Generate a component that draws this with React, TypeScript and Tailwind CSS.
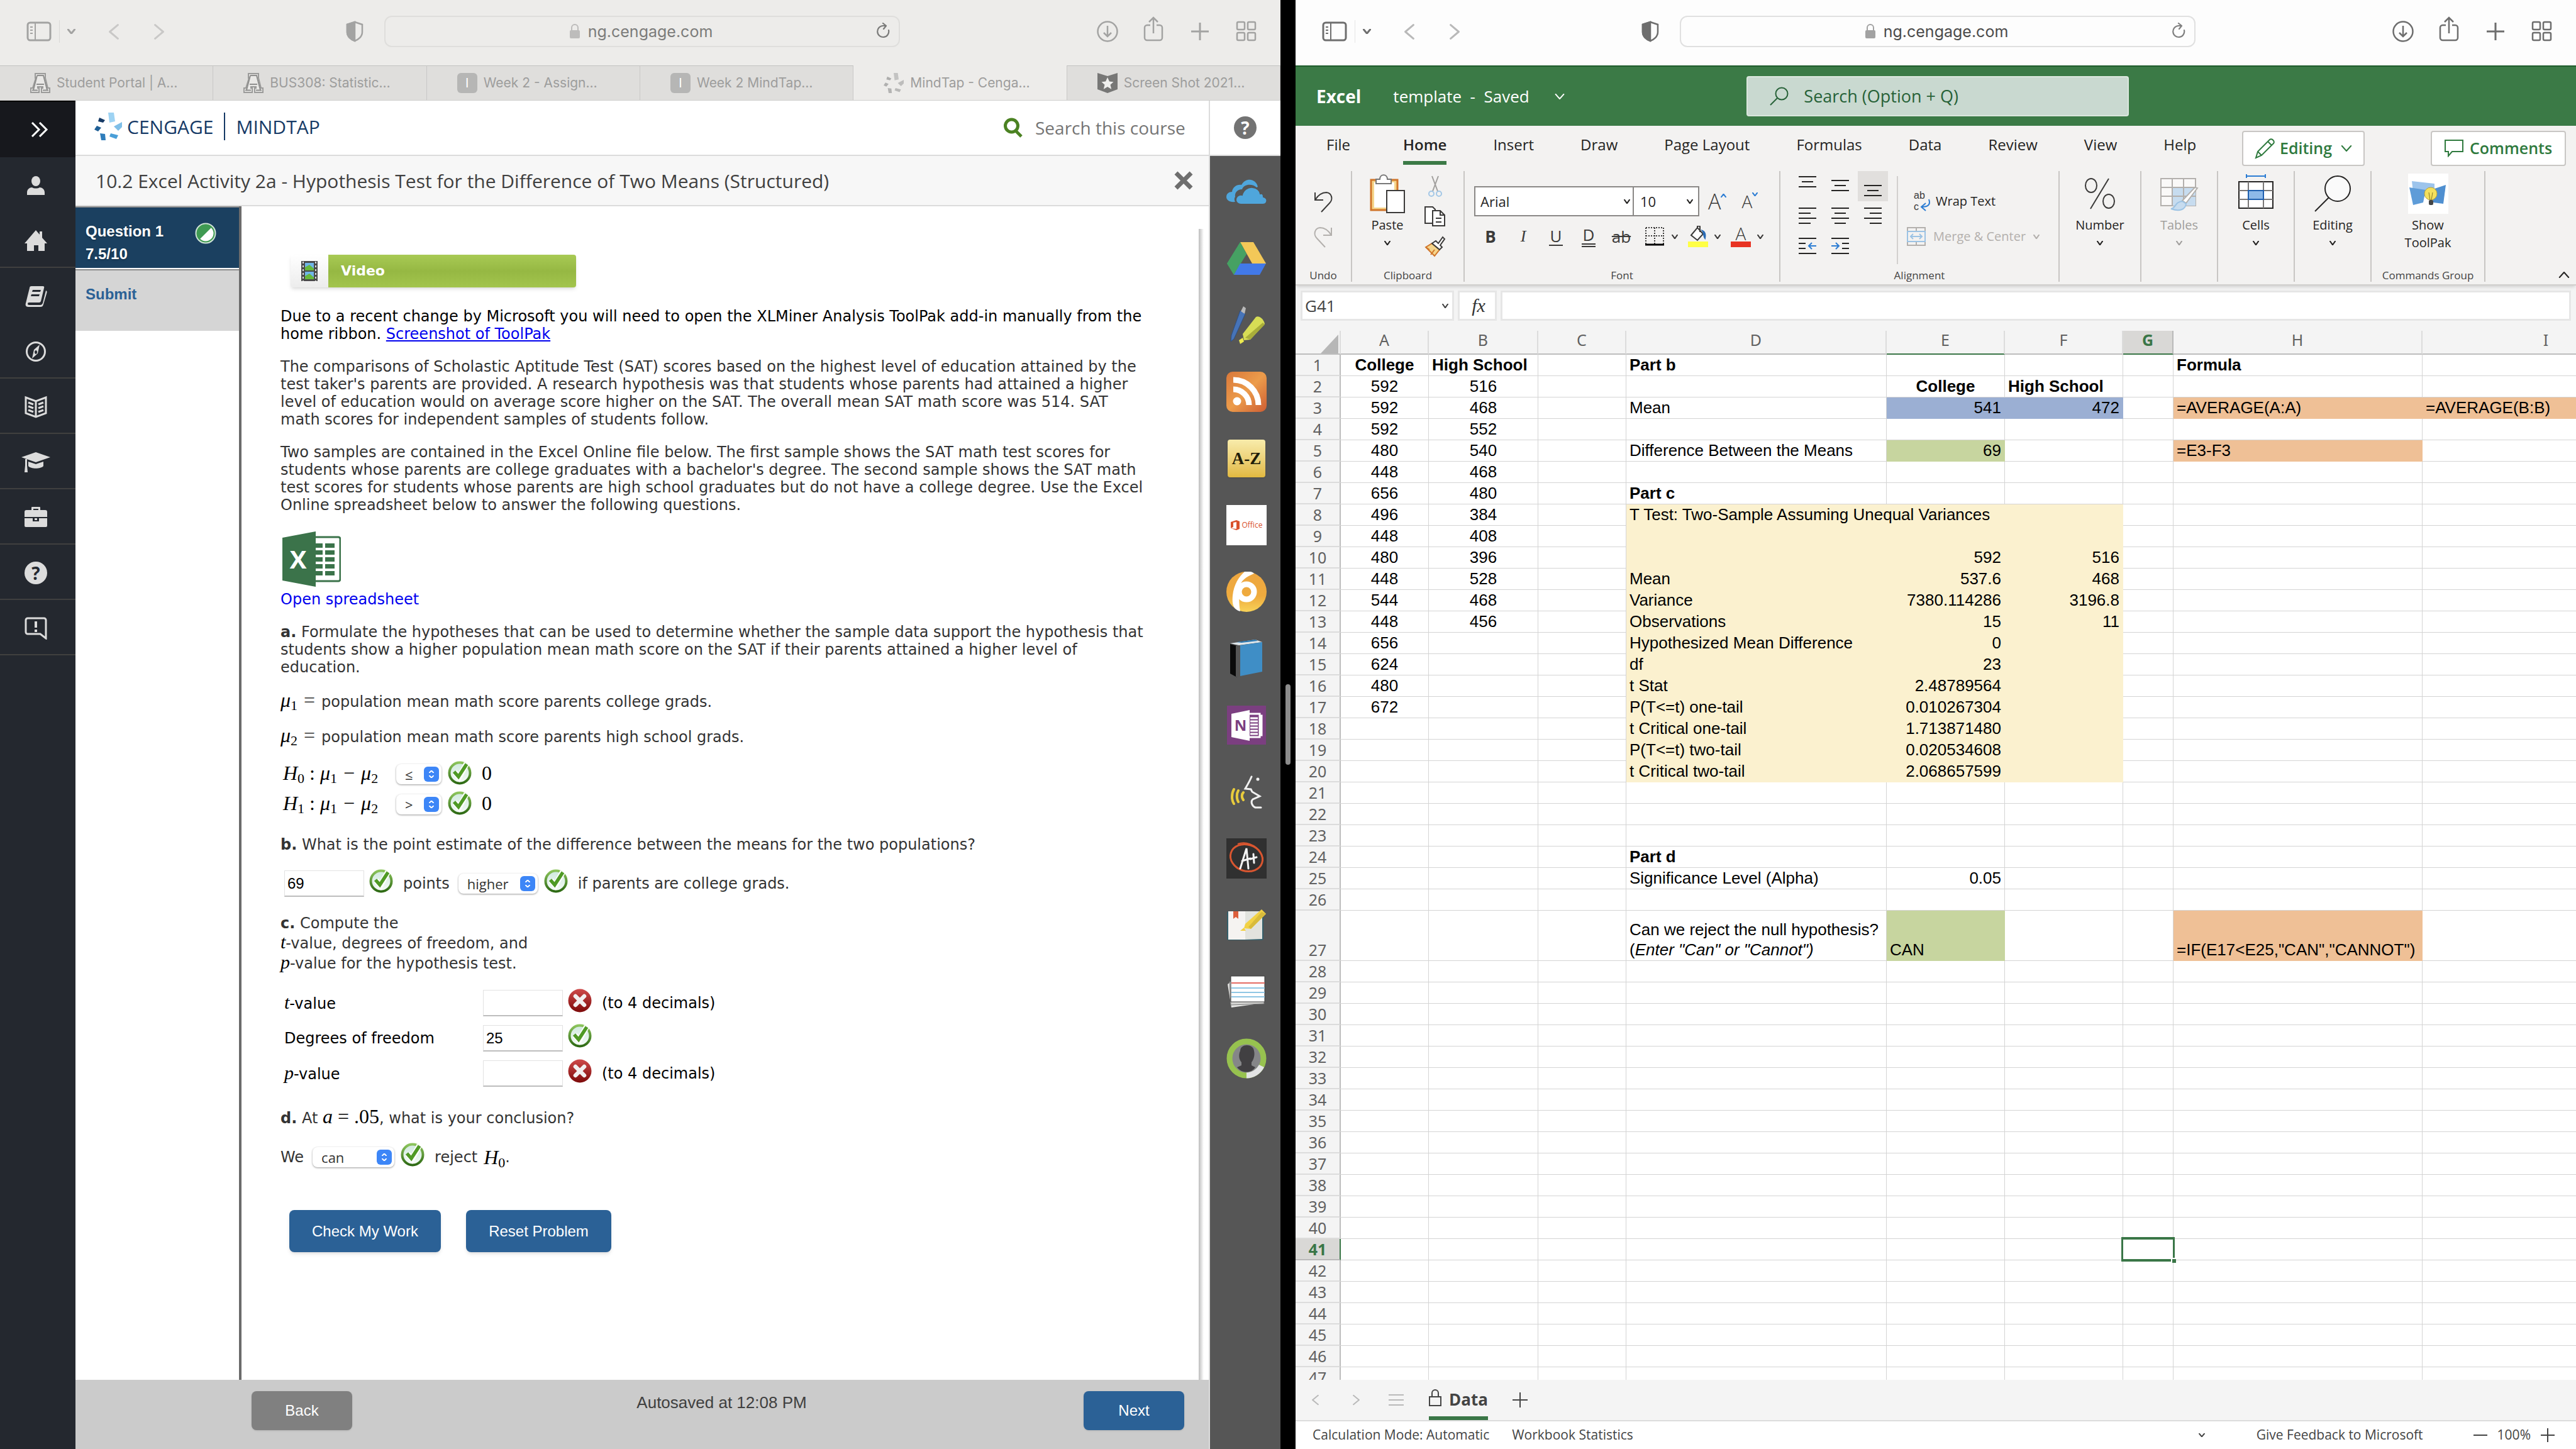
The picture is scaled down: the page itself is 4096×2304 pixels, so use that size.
import React from "react";

const SANS = "font-['Open_Sans','Noto_Sans',sans-serif]";
const ARIAL = "font-['Liberation_Sans',Arial,sans-serif]";
const VERDANA = "font-['DejaVu_Sans',Verdana,sans-serif]";
const SERIF = "font-['Liberation_Serif','Times_New_Roman',serif]";
const SYSTEM = "font-['Inter',Roboto,sans-serif]";

/* ---------- shared glyphs ---------- */

function Chevron({ dir = "down", w = 14, h = 10, sw = 2, className = "" }: { dir?: "down" | "up" | "left" | "right"; w?: number; h?: number; sw?: number; className?: string }) {
  const d = {
    down: "M1 1L5 9L9 1",
    up: "M1 9L5 1L9 9",
    left: "M9 1L1 5L9 9",
    right: "M1 1L9 5L1 9",
  }[dir];
  return (
    <svg width={w} height={h} viewBox="0 0 10 10" preserveAspectRatio="none" fill="none" stroke="currentColor" strokeWidth={sw} className={className} aria-hidden="true">
      <path d={d} vectorEffect="non-scaling-stroke" strokeLinecap="round" strokeLinejoin="round" />
    </svg>
  );
}

function Starburst({ gray = false, size = 44 }: { gray?: boolean; size?: number }) {
  const c = gray
    ? ["#c3c3c2", "#bdbdbc", "#b9b9b8", "#b4b4b3", "#b0b0af", "#adadac"]
    : ["#9ed3f3", "#7fbfe8", "#4a9fd8", "#2f7dbb", "#1f5f96", "#163a66"];
  return (
    <svg width={size} height={size} viewBox="0 0 44 44" aria-hidden="true">
      <path d="M22 0L31 0L33 14L24 16Z" fill={c[0]} />
      <path d="M44 15L44 23L38 29L31 22Z" fill={c[1]} />
      <path d="M26 33L38 36L35 42L24 38Z" fill={c[2]} />
      <path d="M9 33L17 34L18 44L11 44Z" fill={c[3]} />
      <path d="M4 21L11 24L6 30L0 27Z" fill={c[4]} />
      <path d="M8 8L17 12L14 16L6 14Z" fill={c[5]} />
    </svg>
  );
}

/* ---------- browser chrome ---------- */

function BrowserBar({ dim = false }: { dim?: boolean }) {
  const ink = dim ? "text-[#a3a3a2]" : "text-[#6e6e6e]";
  return (
    <div className={`flex h-[104px] shrink-0 items-center pb-1 ${dim ? "bg-[#edecea]" : "bg-[#fdfdfd]"} ${ink}`}>
      <div className="flex flex-1 items-center pl-[42px]">
        <button aria-label="Show sidebar">
          <svg width="40" height="32" viewBox="0 0 40 32" fill="none" stroke="currentColor" strokeWidth="3">
            <rect x="2" y="2" width="36" height="28" rx="4" />
            <path d="M14 2V30M6 9H10M6 14H10M6 19H10" strokeWidth="2" />
          </svg>
        </button>
        <span className={`ml-3 h-9 w-px ${dim ? "bg-[#d9d8d6]" : "bg-[#e6e6e6]"}`} />
        <button aria-label="Tab groups" className="ml-3"><Chevron w={13} h={8} sw={3} /></button>
        <button aria-label="Back" className={dim ? "ml-[53px] text-[#c9c8c7]" : "ml-[53px] text-[#b9b9b9]"}><Chevron dir="left" w={16} h={27} sw={3} /></button>
        <button aria-label="Forward" className={dim ? "ml-14 text-[#c9c8c7]" : "ml-14 text-[#b9b9b9]"}><Chevron dir="right" w={16} h={27} sw={3} /></button>
        <button aria-label="Privacy report" className="mr-8 ml-auto">
          <svg width="30" height="34" viewBox="0 0 30 34" fill="none" stroke="currentColor" strokeWidth="2.5">
            <path d="M15 2L27 6V18C27 25 21 30 15 32C9 30 3 25 3 18V6Z" />
            <path d="M15 2L3 6V18C3 25 9 30 15 32Z" fill="currentColor" />
          </svg>
        </button>
      </div>
      <div className={`flex h-[50px] w-[820px] items-center rounded-xl border-2 pr-3 pl-8 ${dim ? "border-[#dfdedc]" : "border-[#e0e0e0]"}`}>
        <svg width="18" height="24" viewBox="0 0 18 24" className={`ml-auto ${dim ? "text-[#bdbcbb]" : "text-[#a2a2a2]"}`} aria-hidden="true">
          <path d="M4 11V6a5 5 0 0 1 10 0v5" fill="none" stroke="currentColor" strokeWidth="2" />
          <rect x="1" y="10" width="16" height="13" rx="2" fill="currentColor" />
        </svg>
        <span className={`ml-3 text-[25px] leading-8 ${SYSTEM} ${dim ? "text-[#7c7c7b]" : "text-[#4b4b4b]"}`}>ng.cengage.com</span>
        <button aria-label="Reload" className={`ml-auto ${dim ? "text-[#7a7a79]" : "text-[#808080]"}`}>
          <svg width="24" height="28" viewBox="0 0 24 28" fill="none" stroke="currentColor" strokeWidth="2.2" strokeLinecap="round" strokeLinejoin="round">
            <path d="M20 12a9 9 0 1 1-9-7h5M11 1l5 4l-4 5" />
          </svg>
        </button>
      </div>
      <div className="flex flex-1 items-center justify-end gap-[37px] pr-9">
        <button aria-label="Downloads">
          <svg width="36" height="36" viewBox="0 0 36 36" fill="none" stroke="currentColor" strokeWidth="2.5"><circle cx="18" cy="18" r="15.500" /><path d="M18 9V26M12 20L18 26L24 20" /></svg>
        </button>
        <button aria-label="Share" className="pb-2">
          <svg width="36" height="40" viewBox="0 0 36 40" fill="none" stroke="currentColor" strokeWidth="2.5"><path d="M13 14H8a4 4 0 0 0-4 4v16a4 4 0 0 0 4 4h20a4 4 0 0 0 4-4V18a4 4 0 0 0-4-4h-5M18 27V3M11 9L18 2L25 9" /></svg>
        </button>
        <button aria-label="New tab" className="px-1">
          <svg width="30" height="30" viewBox="0 0 30 30" fill="none" stroke="currentColor" strokeWidth="3"><path d="M15 1V29M1 15H29" /></svg>
        </button>
        <button aria-label="Tab overview">
          <svg width="36" height="36" viewBox="0 0 36 36" fill="none" stroke="currentColor" strokeWidth="2.5"><rect x="3" y="3" width="12" height="12" rx="2" /><rect x="20" y="3" width="12" height="12" rx="2" /><rect x="3" y="20" width="12" height="12" rx="2" /><rect x="20" y="20" width="12" height="12" rx="2" /></svg>
        </button>
      </div>
    </div>
  );
}

const CollegeA = () => (
  <svg width="32" height="32" viewBox="0 0 32 32" aria-hidden="true">
    <path d="M8 1H24V8L28 24H31V31H18V24H20V22H12V24H14V31H1V24H4L9 8H8Z" fill="#e9e8e6" stroke="#9b9b9a" strokeWidth="2" />
    <path d="M11 4H21L27 27M11 4L5 27M3 27.500H12M20 27.500H29M10 18H22" fill="none" stroke="#8f8f8e" strokeWidth="2" />
  </svg>
);
const LetterI = () => <span className="flex h-8 w-8 items-center justify-center rounded-md bg-[#b6b6b5] text-[20px] text-white">I</span>;
const StarBadge = () => (
  <svg width="32" height="32" viewBox="0 0 32 32" aria-hidden="true">
    <path d="M0 0L16 5L32 0V26L16 32L0 26Z" fill="#777776" />
    <path d="M16 7l3 6.500l6.500.7l-5 4.500l1.700 7L16 22l-6.200 3.700l1.700-7l-5-4.500l6.500-.7z" fill="#efefee" />
  </svg>
);

const browserTabs = [
  { label: "Student Portal | A…", icon: <CollegeA /> },
  { label: "BUS308: Statistic…", icon: <CollegeA /> },
  { label: "Week 2 - Assign…", icon: <LetterI /> },
  { label: "Week 2 MindTap…", icon: <LetterI /> },
  { label: "MindTap - Cenga…", icon: <Starburst gray size={32} />, active: true },
  { label: "Screen Shot 2021…", icon: <StarBadge /> },
];

function BrowserTabs() {
  return (
    <nav className={`grid h-14 shrink-0 grid-cols-6 border-b border-[#cfcecd] text-[21px] text-[#9d9d9c] ${SYSTEM}`}>
      {browserTabs.map((t) => (
        <a key={t.label} href="#" className={`flex items-center gap-2.5 overflow-hidden border-r border-[#c9c8c7] pl-12 whitespace-nowrap ${t.active ? "bg-[#edecea]" : "border-t border-t-[#c2c2c1] bg-[#dfdedc]"}`}>
          {t.icon}
          <span>{t.label}</span>
        </a>
      ))}
    </nav>
  );
}

/* ---------- MindTap ---------- */

const ic = { width: 36, height: 36, viewBox: "0 0 36 36", fill: "currentColor" } as const;
const railIcons: { label: string; icon: React.ReactNode; line: boolean }[] = [
  { label: "Profile", line: false, icon: <svg {...ic}><ellipse cx="18" cy="11" rx="7" ry="8" /><path d="M4 33v-4c0-5 4-8 8-8c3 2 9 2 12 0c4 0 8 3 8 8v4z" /></svg> },
  { label: "Home", line: true, icon: <svg {...ic}><path d="M18 1L24 8V3H28V13L36 22H32V34H22V25H15V34H4V22H0Z" /></svg> },
  { label: "Reader", line: false, icon: <svg {...ic}><path fillRule="evenodd" d="M11 2H29a2 2 0 0 1 2 3L26 26a3 3 0 0 1-3 2H7a2 2 0 0 0 0 4H25c2 0 3-1 4-3L34 9c2 1 2 2 1 5L30 31c-1 3-2 4-5 4H6c-4 0-5-3-4-6L8 5c0-2 1-3 3-3zM13 8L12 11H25L26 8zM11 15L10 18H23L24 15z" /></svg> },
  { label: "Explore", line: true, icon: <svg {...ic}><circle cx="18" cy="18" r="14.500" fill="none" stroke="currentColor" strokeWidth="3" /><path fillRule="evenodd" d="M24 7L21 21L12 29L15 15zM18 16a2 3 0 1 0 .1 0z" /></svg> },
  { label: "Book", line: true, icon: <svg {...ic} fill="none" stroke="currentColor" strokeWidth="3"><path d="M2 3L18 9L34 3V28L18 34L2 28ZM18 9V34M6 11L14 14M6 17L14 20M6 23L14 26M30 11L22 14M30 17L22 20M30 23L22 26" /></svg> },
  { label: "Courses", line: true, icon: <svg width="46" height="34" viewBox="0 0 46 34" fill="currentColor"><path d="M23 1L46 9L23 17L0 9ZM11 16L23 20L35 16V23C31 28 15 28 11 23ZM6 12H9V22L10 33H5L6 22Z" /></svg> },
  { label: "Work", line: true, icon: <svg {...ic}><path fillRule="evenodd" d="M11 6V2a1 1 0 0 1 1-1h12a1 1 0 0 1 1 1v4h8a3 3 0 0 1 3 3v8H0V9a3 3 0 0 1 3-3zM14 6h8V4h-8zM0 19H13V24H23V19H36V31a2 2 0 0 1-2 2H2a2 2 0 0 1-2-2zM16 19h4v3h-4z" /></svg> },
  { label: "Help", line: true, icon: <span className={`flex h-9 w-9 items-center justify-center rounded-full bg-[#dcdcdc] text-[28px] leading-9 font-bold text-[#24282f] ${SANS}`}>?</span> },
  { label: "Feedback", line: true, icon: <svg {...ic} fill="none" stroke="currentColor" strokeWidth="3"><path d="M5 2H31a3 3 0 0 1 3 3V34L25 27H5a3 3 0 0 1-3-3V5a3 3 0 0 1 3-3Z" /><path d="M18 7V17M18 20V24" strokeWidth="4" /></svg> },
];

function LeftRail() {
  return (
    <nav className="flex w-[120px] shrink-0 flex-col bg-[#24282f] text-[#dcdcdc]">
      <button aria-label="Expand menu" className="flex h-[90px] items-center justify-center border-t-2 border-black bg-[#17181d] pl-1.5 text-white">
        <svg width="28" height="24" viewBox="0 0 28 24" fill="none" stroke="currentColor" strokeWidth="3"><path d="M2 1L13 12L2 23M14 1L25 12L14 23" /></svg>
      </button>
      {railIcons.map((r) => (
        <button key={r.label} aria-label={r.label} className={`flex h-[88px] items-center justify-center border-b-2 pt-1 pr-1.5 ${r.line ? "border-[#40403f]" : "border-transparent"}`}>
          {r.icon}
        </button>
      ))}
    </nav>
  );
}

const toolIcons: { label: string; icon: React.ReactNode }[] = [
  { label: "OneDrive", icon: <svg width="64" height="40" viewBox="0 0 64 40" fill="#4fa6dc"><path d="M14 36C5 37 0 33 0 28c0-5 4-8 9-8c1-7 7-12 15-11C28 2 34 0 39 1c6 1 10 6 11 11L48 13C42 7 28 7 25 16c-8 0-12 6-11 12c-2 3-1 6 0 8z" /><path d="M23 40c-4 0-8-3-8-7c0-5 4-9 10-8c2-8 9-13 17-12c7 1 11 5 12 10c3-1 5 1 5 5c5 1 6 5 5 8c-1 3-3 4-6 4z" stroke="#565656" strokeWidth="2" /></svg> },
  { label: "Google Drive", icon: <svg width="64" height="54" viewBox="0 0 64 54"><path d="M22 1L32 20L12 53L1 35Z" fill="#43a05f" /><path d="M22 1H43L63 35H41Z" fill="#f3c858" /><path d="M1 35L22 1L32 20L22 35L12 53Z" fill="#46a163" /><path d="M22 35H63L53 53H12Z" fill="#4279e8" /></svg> },
  { label: "Pen and highlighter", icon: <svg width="60" height="60" viewBox="0 0 60 60"><path d="M20 7L28 12L10 52L5 56L6 46Z" fill="#4774b8" stroke="#2d4f86" /><path d="M21 8L25 0L29 3L27 12Z" fill="#b9b9b9" /><path d="M24 44L45 17C51 14 58 22 59 28L36 53L26 54Z" fill="#d7dd55" /><path d="M36 53L59 29L56 26L28 50Z" fill="#a9ae3a" /><path d="M18 54L24 50L26 56L20 60Z" fill="#ecea4f" /></svg> },
  { label: "RSS", icon: <svg width="64" height="64" viewBox="0 0 64 64"><defs><linearGradient id="rss" x2="1" y2="1"><stop stopColor="#d9773a" /><stop offset=".5" stopColor="#ec9c4b" /><stop offset="1" stopColor="#cd5d33" /></linearGradient></defs><rect width="64" height="64" rx="10" fill="url(#rss)" /><circle cx="17" cy="47" r="6.500" fill="#fff" /><path d="M11 28a25 25 0 0 1 25 25M11 13a40 40 0 0 1 40 40" fill="none" stroke="#fff" strokeWidth="9" /></svg> },
  { label: "Glossary", icon: <span className={`flex h-[60px] w-[60px] items-center justify-center rounded bg-gradient-to-b from-[#f8ecab] to-[#e2b93f] text-[27px] font-bold text-[#211d08] shadow ${SERIF}`}>A-Z</span> },
  { label: "Office", icon: <span className={`flex h-16 w-16 items-center justify-center gap-1 bg-white text-[12px] text-[#d9512c] ${SANS}`}><svg width="14" height="16" viewBox="0 0 14 16" aria-hidden="true"><path d="M0 3L9 0L14 2V14L9 16L0 13L9 14V3L4 4V11L0 13Z" fill="#d9512c" /></svg>Office</span> },
  { label: "Bongo", icon: <svg width="64" height="64" viewBox="0 0 64 64"><defs><linearGradient id="six" x2="0" y2="1"><stop stopColor="#eda640" /><stop offset=".6" stopColor="#efab3e" /><stop offset="1" stopColor="#f8d258" /></linearGradient></defs><circle cx="32" cy="32" r="32" fill="url(#six)" /><circle cx="32" cy="32" r="12" fill="none" stroke="#fff" strokeWidth="9" /><path d="M29 0C40-1 42 1 44 3C32 8 22 14 21 26C20 44 20 52 22 63C10 60 9 50 10 38C12 20 20 8 29 0Z" fill="#fff" /></svg> },
  { label: "Textbook", icon: <svg width="56" height="60" viewBox="0 0 56 60"><path d="M2 7L13 10V60L2 54Z" fill="#0a0a0a" /><path d="M2 6L42 0L53 4L16 9Z" fill="#dfe6ea" /><path d="M12 4L42 0L46 2L20 5Z" fill="#2a77b0" /><path d="M11 10L18 9V58L11 60Z" fill="#555" /><path d="M18 9L53 4V51L18 58Z" fill="#3f8ec6" /></svg> },
  { label: "OneNote", icon: <svg width="62" height="62" viewBox="0 0 62 62"><rect width="62" height="62" fill="#7b3f80" /><path d="M7 13L36 7V56L7 50Z" fill="#fff" /><text x="21.500" y="40" textAnchor="middle" fontSize="24" fontWeight="700" fill="#7b3f80" fontFamily="Open Sans">N</text><path d="M36 13H52V50H36M52 16H55V26H52M52 28H55V36H52M52 38H55V47H52" fill="none" stroke="#fff" strokeWidth="3" /><path d="M37 20H49M37 25H49M37 30H49M37 35H49M37 40H49M37 45H49" stroke="#fff" strokeWidth="3" /></svg> },
  { label: "ReadSpeaker", icon: <svg width="54" height="54" viewBox="0 0 54 54" fill="none" strokeLinecap="round"><path d="M35 3C32 10 28 17 25 22L34 23L36 27L48 34L37 39C33 43 36 50 41 52H50" stroke="#f0f0f0" strokeWidth="3" /><circle cx="45" cy="7" r="2.500" fill="#f0f0f0" /><path d="M22 28C19 31 19 36 22 40M14 25C11 30 11 38 14 43M7 23C3 30 3 40 7 46" stroke="#e8cb3d" strokeWidth="4" /></svg> },
  { label: "Grades", icon: <svg width="64" height="64" viewBox="0 0 64 64"><rect width="64" height="64" fill="#303030" /><ellipse cx="32" cy="31" rx="26" ry="21" transform="rotate(18 32 31)" fill="none" stroke="#d95630" strokeWidth="3" /><path d="M18 9C30 4 46 10 54 22" fill="none" stroke="#d95630" strokeWidth="2" /><path d="M22 48L32 16L35 48M25 36L38 32M38 33L48 30M43 25L44 39" fill="none" stroke="#f4f4f4" strokeWidth="3" strokeLinecap="round" /></svg> },
  { label: "Notebook", icon: <svg width="62" height="50" viewBox="0 0 62 50"><rect y="3" width="58" height="46" rx="3" fill="#35606c" /><path d="M2 3H29V48H2Z" fill="#f5f3f1" /><path d="M29 3H56V47L29 48Z" fill="#e2e3de" /><path d="M10 3H18V15L14 12L10 15Z" fill="#dc5f3c" /><path d="M29 23L55 0L62 7L38 31L27 30Z" fill="#f2d144" /><path d="M62 7L55 4L34 28L38 31Z" fill="#d8bb3b" /><path d="M21 34L27 29L30 34Z" fill="#f2d144" /></svg> },
  { label: "Flashcards", icon: <svg width="60" height="52" viewBox="0 0 60 52"><path d="M0 14L8 8L56 44L6 51Z" fill="#e8e8e6" /><path d="M3 10L58 6V45L5 47Z" fill="#d4d4d2" stroke="#777" /><path d="M5 1H59V42H5Z" fill="#fff" stroke="#3b3b3b" /><path d="M6 12H59" stroke="#e46b62" strokeWidth="2" /><path d="M6 20H59M6 27H59M6 34H59" stroke="#8fc6e4" strokeWidth="2" /></svg> },
  { label: "Account", icon: <svg width="64" height="64" viewBox="0 0 64 64"><circle cx="32" cy="32" r="27" fill="#858688" stroke="#97c24f" strokeWidth="9" /><path d="M32 59A27 27 0 0 0 56 44" fill="none" stroke="#e3e4e5" strokeWidth="9" /><path d="M22 20C22 8 43 8 44 20C46 28 42 36 40 38V43L46 46C40 56 24 56 17 46L24 43V38C20 34 19 26 22 20Z" fill="#414042" /></svg> },
];

function ToolRail() {
  return (
    <aside className="flex w-[112px] shrink-0 flex-col bg-[#565656]">
      <div className="flex h-[88px] items-center justify-center border-b-2 border-[#dcdcdc] bg-white">
        <button aria-label="Help" className={`h-9 w-9 rounded-full bg-[#737373] text-[28px] leading-9 font-bold text-white ${SANS}`}>?</button>
      </div>
      <div className="flex flex-col pt-1 pl-1">
        {toolIcons.map((t) => (
          <button key={t.label} aria-label={t.label} className="flex h-[106px] items-center justify-center">{t.icon}</button>
        ))}
      </div>
    </aside>
  );
}

const Check = () => (
  <svg width="38" height="38" viewBox="0 0 38 38" className="shrink-0" role="img" aria-label="Correct">
    <defs>
      <linearGradient id="ck" x2="0" y2="1"><stop stopColor="#8cc45c" /><stop offset="1" stopColor="#2e6a14" /></linearGradient>
      <linearGradient id="ckf" x2="0" y2="1"><stop stopColor="#cfe9dd" /><stop offset="1" stopColor="#f6fbf8" /></linearGradient>
    </defs>
    <circle cx="19" cy="19" r="16.500" fill="url(#ckf)" stroke="url(#ck)" strokeWidth="4" />
    <path d="M11 18L18 26L30 4" fill="none" stroke="#fff" strokeWidth="9" />
    <path d="M10 17L17 25L30 5" fill="none" stroke="#4f9a25" strokeWidth="5.500" />
  </svg>
);

const Cross = () => (
  <svg width="38" height="38" viewBox="0 0 38 38" className="shrink-0" role="img" aria-label="Incorrect">
    <defs><linearGradient id="xx" x2="0" y2="1"><stop stopColor="#cf4a4a" /><stop offset="1" stopColor="#7d0a0a" /></linearGradient></defs>
    <circle cx="19" cy="19" r="18.500" fill="url(#xx)" />
    <path d="M12 12L26 26M26 12L12 26" stroke="#f2f0f0" strokeWidth="6.500" strokeLinecap="round" />
  </svg>
);

function Pick({ label, value, className }: { label: string; value: string; className: string }) {
  return (
    <span className={`relative inline-block h-8 shrink-0 rounded-lg bg-white align-middle shadow-[0_1px_3px_rgba(0,0,0,0.4)] ${className}`}>
      <select aria-label={label} defaultValue={value} className={`block h-full w-full appearance-none pl-3.5 text-[22px] leading-8 text-[#333] ${SANS}`}>
        <option>{value}</option>
      </select>
      <span className="pointer-events-none absolute top-1 right-1 flex h-6 w-6 flex-col items-center justify-center gap-1 rounded-md bg-[#3d86f7] text-white">
        <Chevron dir="up" w={8} h={4} sw={2} />
        <Chevron w={8} h={4} sw={2} />
      </span>
    </span>
  );
}

function Answer({ label, value = "" }: { label: string; value?: string }) {
  return <input aria-label={label} defaultValue={value} className={`h-[42px] w-[127px] shrink-0 border border-b-2 border-[#e2e2e2] border-b-[#bdbdbd] px-1 text-[24px] text-black ${ARIAL}`} />;
}

function Mu({ n }: { n: string }) {
  return (
    <span className={`text-[32px] text-black ${SERIF}`}>
      <i>μ</i>
      <sub className="bottom-[-5px] text-[22px] leading-none">{n}</sub>
    </span>
  );
}

function Hyp({ n, sign }: { n: string; sign: string }) {
  return (
    <div className={`flex h-12 items-center pl-1 text-[32px] text-black ${SERIF}`}>
      <span className="w-[180px] whitespace-nowrap">
        <i>H</i><sub className="bottom-[-5px] text-[22px] leading-none">{n}</sub>
        <span className="mx-2">:</span>
        <Mu n="1" />
        <span className="mx-2.5">−</span>
        <Mu n="2" />
      </span>
      <span className="flex pt-1"><Pick label={`Hypothesis ${n} relation`} value={sign} className="w-[72px]" /></span>
      <span className="ml-2.5"><Check /></span>
      <span className="ml-4">0</span>
    </div>
  );
}

function Exercise() {
  return (
    <main className={`flex-1 overflow-hidden pt-[77px] pl-[62px] text-[24px] leading-7 whitespace-nowrap text-[#333] ${VERDANA}`}>
      <a href="#" className="ml-4 flex h-[52px] w-[454px] items-stretch overflow-hidden rounded shadow-md">
        <span className="flex w-[60px] items-center justify-center bg-gradient-to-b from-white to-[#ececec]">
          <svg width="26" height="32" viewBox="0 0 26 32" aria-hidden="true"><rect width="26" height="32" fill="#4a4a4a" /><rect x="6" y="3" width="14" height="12" fill="#6fb5e8" /><rect x="6" y="17" width="14" height="12" fill="#6fb5e8" /><path d="M6 15V10L13 6L20 12V15ZM6 29V24L13 20L20 26V29Z" fill="#67b93c" /><path d="M3 1V32M23 1V32" stroke="#ddd" strokeWidth="2" strokeDasharray="3 3" /></svg>
        </span>
        <span className="flex flex-1 items-center bg-gradient-to-b from-[#a8ca54] via-[#96b843] to-[#a3c54d] pl-5 text-[22px] font-bold text-white">Video</span>
      </a>
      <p className="mt-8 text-black">
        Due to a recent change by Microsoft you will need to open the XLMiner Analysis ToolPak add-in manually from the<br />
        home ribbon. <a href="#" className="text-[#0000ee] underline">Screenshot of ToolPak</a>
      </p>
      <p className="mt-6">
        The comparisons of Scholastic Aptitude Test (SAT) scores based on the highest level of education attained by the<br />
        test taker's parents are provided. A research hypothesis was that students whose parents had attained a higher<br />
        level of education would on average score higher on the SAT. The overall mean SAT math score was 514. SAT<br />
        math scores for independent samples of students follow.
      </p>
      <p className="mt-6">
        Two samples are contained in the Excel Online file below. The first sample shows the SAT math test scores for<br />
        students whose parents are college graduates with a bachelor's degree. The second sample shows the SAT math<br />
        test scores for students whose parents are high school graduates but do not have a college degree. Use the Excel<br />
        Online spreadsheet below to answer the following questions.
      </p>
      <a href="#" className="mt-7 block w-fit text-[#0000ee]">
        <svg width="96" height="88" viewBox="0 0 96 88" aria-hidden="true" className="mb-1.5">
          <path d="M52 9H92a3 3 0 0 1 3 3V76a3 3 0 0 1-3 3H52" fill="#fff" stroke="#3b734a" strokeWidth="3" />
          <path d="M54 19H67V26H54ZM71 19H86V26H71ZM54 30H67V37H54ZM71 30H86V37H71ZM54 41H67V48H54ZM71 41H86V48H71ZM54 52H67V59H54ZM71 52H86V59H71ZM54 63H67V70H54ZM71 63H86V70H71Z" fill="#3b734a" />
          <path d="M3 10L56 0V88L3 78Z" fill="#3b734a" />
          <text x="28" y="59" textAnchor="middle" fontSize="40" fontWeight="700" fill="#fff" fontFamily="Open Sans">X</text>
        </svg>
        Open spreadsheet
      </a>
      <p className="mt-6">
        <b>a.</b> Formulate the hypotheses that can be used to determine whether the sample data support the hypothesis that<br />
        students show a higher population mean math score on the SAT if their parents attained a higher level of<br />
        education.
      </p>
      <p className="mt-2.5 h-14 leading-[56px]"><Mu n="1" /><span className={`mx-2.5 text-[32px] ${SERIF}`}>=</span>population mean math score parents college grads.</p>
      <p className="h-14 leading-[56px]"><Mu n="2" /><span className={`mx-2.5 text-[32px] ${SERIF}`}>=</span>population mean math score parents high school grads.</p>
      <div className="mt-2">
        <Hyp n="0" sign="≤" />
        <Hyp n="1" sign=">" />
      </div>
      <p className="mt-7"><b>b.</b> What is the point estimate of the difference between the means for the two populations?</p>
      <div className="mt-5 flex h-14 items-center pl-1.5">
        <Answer label="Point estimate" value="69" />
        <span className="mr-4 mb-2 ml-2"><Check /></span>
        points
        <span className="mr-2.5 ml-3.5 flex"><Pick label="Direction" value="higher" className="w-[126px]" /></span>
        <span className="mr-4 mb-2"><Check /></span>
        if parents are college grads.
      </div>
      <p className="mt-5 leading-[30px]">
        <b>c.</b> Compute the<br />
        <i className={`text-[30px] text-black ${SERIF}`}>t</i>-value, degrees of freedom, and<br />
        <i className={`text-[30px] text-black ${SERIF}`}>p</i>-value for the hypothesis test.
      </p>
      <table className="mt-5 ml-1.5 text-black">
        <tbody>
          {[
            { k: "t", label: <><i className={`text-[30px] ${SERIF}`}>t</i>-value</>, v: "", ok: false },
            { k: "Degrees of freedom", label: "Degrees of freedom", v: "25", ok: true },
            { k: "p", label: <><i className={`text-[30px] ${SERIF}`}>p</i>-value</>, v: "", ok: false },
          ].map((r) => (
            <tr key={r.k} className="h-14">
              <th scope="row" className="w-[316px] p-0 text-left font-normal">{r.label}</th>
              <td className="p-0">
                <div className="flex items-center">
                  <Answer label={r.k} value={r.v} />
                  <span className="mr-4 mb-2 ml-2">{r.ok ? <Check /> : <Cross />}</span>
                  {!r.ok && "(to 4 decimals)"}
                </div>
              </td>
            </tr>
          ))}
        </tbody>
      </table>
      <p className="mt-6.5"><b>d.</b> At <span className={`text-[32px] leading-7 text-black ${SERIF}`}><i>a</i><span className="mx-2">=</span>.05</span>, what is your conclusion?</p>
      <div className="mt-5 flex h-14 items-center">
        We
        <span className="mr-2.5 ml-3.5 flex"><Pick label="Conclusion" value="can" className="w-[130px]" /></span>
        <span className="mr-4 mb-2"><Check /></span>
        reject
        <span className={`ml-2.5 text-[32px] text-black ${SERIF}`}><i>H</i><sub className="bottom-[-5px] text-[22px]">0</sub></span>.
      </div>
      <div className={`mt-14 ml-3.5 flex gap-10 text-[24px] text-white ${ARIAL}`}>
        <button className="h-[67px] w-[241px] rounded-lg bg-[#2b6196] shadow-md">Check My Work</button>
        <button className="h-[67px] w-[231px] rounded-lg bg-[#2b6196] shadow-md">Reset Problem</button>
      </div>
    </main>
  );
}

function MindTap() {
  return (
    <section className="flex min-w-0 flex-1 flex-col overflow-hidden bg-white">
      <BrowserBar dim />
      <BrowserTabs />
      <div className="flex min-h-0 flex-1">
        <LeftRail />
        <div className="flex min-w-0 flex-1 flex-col border-r-2 border-[#dcdcdc]">
          <header className="flex h-[88px] shrink-0 items-center border-b-2 border-[#dcdcdc] pb-1 pl-[30px]">
            <a href="#" className={`flex items-center text-[30px] text-[#163a66] ${SANS}`}>
              <Starburst />
              <span className="ml-2">CENGAGE</span>
              <span className="mx-[17px] h-11 w-0.5 bg-[#163a66]" />
              <span>MINDTAP</span>
            </a>
            <label className="ml-auto flex items-center pt-1">
              <svg width="30" height="32" viewBox="0 0 30 32" fill="none" stroke="#4b8222" strokeWidth="5" aria-hidden="true"><circle cx="12.500" cy="13" r="10" /><path d="M19 21L28 30" /></svg>
              <input placeholder="Search this course" className={`ml-5 w-[276px] text-[28px] outline-none placeholder:text-[#757575] ${SANS}`} />
            </label>
          </header>
          <div className="flex h-20 shrink-0 items-center justify-between border-b-2 border-[#dcdcdc] bg-[#f7f7f7] pr-[25px] pl-8">
            <h1 className={`text-[30px] text-[#404040] ${SANS}`}>10.2 Excel Activity 2a - Hypothesis Test for the Difference of Two Means (Structured)</h1>
            <button aria-label="Close"><svg width="30" height="30" viewBox="0 0 30 30" stroke="#6e6e6e" strokeWidth="7"><path d="M3 3L27 27M27 3L3 27" /></svg></button>
          </div>
          <div className="flex min-h-0 flex-1">
            <aside className={`w-[264px] shrink-0 border-r-4 border-[#6b6b6b] text-[24px] font-bold ${ARIAL}`}>
              <a href="#" className="flex h-[98px] justify-between border-t-2 border-[#8c8c8c] bg-[#1b4060] pt-4 pr-9 pl-4 leading-9 text-white text-shadow-md">
                <span className="pt-1">Question 1<br />7.5/10</span>
                <svg width="34" height="34" viewBox="0 0 34 34" className="mt-2"><circle cx="17" cy="17" r="15" fill="#fff" stroke="#cfe3d6" strokeWidth="3" /><path d="M27 7A14 14 0 1 0 7 27Z" fill="#3f9a52" /><circle cx="17" cy="17" r="13.500" fill="none" stroke="#3f9a52" strokeWidth="2" /></svg>
              </a>
              <a href="#" className="mt-0.5 block h-[98px] border-t-2 border-[#8c8c8c] bg-[#d5d5d5] pt-5 pl-4 leading-9 text-[#2b6196]">Submit</a>
            </aside>
            <Exercise />
            <div className="w-4 shrink-0 pt-9">
              <div className="h-full w-2 bg-gradient-to-r from-[#bdbdbd] to-white" />
            </div>
          </div>
          <footer className={`flex h-[110px] shrink-0 items-start justify-between bg-[#cbcbcb] pt-[18px] pr-[39px] pl-[280px] text-[24px] text-white ${ARIAL}`}>
            <button className="h-[62px] w-40 rounded-lg bg-[#808080] shadow">Back</button>
            <p className="ml-3 text-[26px] leading-9 text-[#404040]">Autosaved at 12:08 PM</p>
            <button className="h-[62px] w-40 rounded-lg bg-[#2b6196] shadow">Next</button>
          </footer>
        </div>
        <ToolRail />
      </div>
    </section>
  );
}

/* ---------- Excel ribbon ---------- */

function Group({ label = "", className, children }: { label?: string; className: string; children: React.ReactNode }) {
  return (
    <div className={`flex shrink-0 flex-col border-r-2 border-[#c8c6c4] ${className}`}>
      <div className="flex h-[156px]">{children}</div>
      <div className="text-center text-[17px] leading-5 text-[#444]">{label}</div>
    </div>
  );
}

function BigButton({ label, second, muted, children }: { label: string; second?: string; muted?: boolean; children: React.ReactNode }) {
  return (
    <button className={`flex w-full flex-col items-center text-[20px] leading-7 ${muted ? "text-[#a19f9d]" : "text-[#252423]"}`}>
      <span className="flex h-[72px] items-center">{children}</span>
      <span>{label}</span>
      <span className="flex h-7 items-center">{second ?? <Chevron w={10} h={7} />}</span>
    </button>
  );
}

function Lines({ rows }: { rows: [number, number, number][] }) {
  return (
    <svg width="30" height="48" viewBox="0 0 30 48" stroke="#252423" strokeWidth="2" aria-hidden="true">
      {rows.map(([a, b, y]) => <path key={y} d={`M${a} ${y}H${b}`} />)}
    </svg>
  );
}

const alignButtons: { label: string; rows: [number, number, number][]; on?: boolean }[] = [
  { label: "Top align", rows: [[1, 29, 9], [6, 24, 17], [1, 29, 25]] },
  { label: "Middle align", rows: [[1, 29, 15], [6, 24, 23], [1, 29, 31]] },
  { label: "Bottom align", rows: [[1, 29, 23], [6, 24, 31], [1, 29, 39]], on: true },
  { label: "Align left", rows: [[1, 29, 11], [1, 20, 19], [1, 29, 27], [1, 20, 35]] },
  { label: "Center", rows: [[1, 29, 11], [6, 24, 19], [1, 29, 27], [6, 24, 35]] },
  { label: "Align right", rows: [[1, 29, 11], [10, 29, 19], [1, 29, 27], [10, 29, 35]] },
];

const fontButtons: { label: string; node: React.ReactNode }[] = [
  { label: "Bold", node: <b>B</b> },
  { label: "Italic", node: <i className={SERIF}>I</i> },
  { label: "Underline", node: <span className="border-b-2 border-[#3b3a39] px-0.5 leading-7">U</span> },
  { label: "Double underline", node: <span className="border-b-[6px] border-double border-[#3b3a39] px-0.5 leading-7">D</span> },
  { label: "Strikethrough", node: <span className="line-through">ab</span> },
];

const ribbonTabs = ["File", "Home", "Insert", "Draw", "Page Layout", "Formulas", "Data", "Review", "View", "Help"];

function Ribbon() {
  return (
    <div className={`flex h-[254px] shrink-0 flex-col border-b-2 border-[#d2d0ce] bg-[#f3f2f1] text-[#252423] shadow-md ${SANS}`}>
      <div className="flex h-16 items-center pr-4 pl-[49px]">
        <nav className="flex h-full flex-1 gap-[74px] text-[24px]">
          {ribbonTabs.map((t) => (
            <button key={t} className={`h-[62px] border-b-[6px] pt-1 whitespace-nowrap ${t === "Home" ? "ml-2.5 border-[#3b7a46] font-semibold" : "border-transparent"}`}>{t}</button>
          ))}
        </nav>
        <button className="mt-2 flex h-14 w-[195px] items-center justify-center gap-2 rounded border-2 border-[#c8c6c4] bg-white text-[25px] font-semibold text-[#2f7a3e]">
          <svg width="32" height="34" viewBox="0 0 32 34" fill="none" stroke="currentColor" strokeWidth="2" aria-hidden="true"><path d="M2 32L5 22L24 3C27 0 33 6 30 9L11 28ZM21 6L27 12M5 22L11 28" /></svg>
          Editing
          <Chevron w={18} h={10} className="ml-1.5" />
        </button>
        <button className="mt-2 ml-[105px] flex h-14 w-[215px] items-center justify-center gap-2.5 rounded border-2 border-[#c8c6c4] bg-white text-[25px] font-semibold text-[#2f7a3e]">
          <svg width="30" height="28" viewBox="0 0 30 28" fill="none" stroke="currentColor" strokeWidth="2" aria-hidden="true"><path d="M1 1H29V19H12L6 26V19H1Z" /></svg>
          Comments
        </button>
      </div>
      <div className="mt-2 flex h-44">
        <Group label="Undo" className="w-[90px]">
          <div className="flex w-full flex-col items-center gap-[22px] pt-8">
            <button aria-label="Undo"><svg width="32" height="34" viewBox="0 0 32 34" fill="none" stroke="#3b3a39" strokeWidth="2"><path d="M3 2V14H16M3 14C8 6 14 2 21 2C30 3 32 13 26 19L13 33" /></svg></button>
            <button aria-label="Redo"><svg width="32" height="34" viewBox="0 0 32 34" fill="none" stroke="#b3b0ad" strokeWidth="2"><path d="M29 2V14H16M29 14C24 6 18 2 11 2C2 3 0 13 6 19L19 33" /></svg></button>
          </div>
        </Group>
        <Group label="Clipboard" className="w-[179px]">
          <div className="ml-2 w-[96px]">
            <BigButton label="Paste">
              <svg width="56" height="64" viewBox="0 0 56 64" aria-hidden="true"><rect x="2" y="10" width="42" height="48" fill="#f5d58b" stroke="#d0752a" strokeWidth="3" /><rect x="7" y="14" width="32" height="40" fill="#fff" /><path d="M10 16V9H16C16 0 28 0 28 9H34V16Z" fill="#fff" stroke="#777" strokeWidth="2" /><rect x="27" y="27" width="28" height="35" fill="#fff" stroke="#3b3a39" strokeWidth="2" /></svg>
            </BigButton>
          </div>
          <div className="ml-2 flex flex-col">
            <button aria-label="Cut" className="flex h-12 w-10 items-center justify-center"><svg width="22" height="34" viewBox="0 0 22 34" fill="none" strokeWidth="2"><path d="M6 1L15 25M16 1L7 25" stroke="#a19f9d" /><circle cx="5" cy="29" r="4" stroke="#a3c7e6" /><circle cx="17" cy="29" r="4" stroke="#a3c7e6" /></svg></button>
            <button aria-label="Copy" className="flex h-12 w-10 items-center justify-center"><svg width="34" height="34" viewBox="0 0 34 34" fill="#fff" stroke="#3b3a39" strokeWidth="2"><path d="M12 28H1V2H13L17 6V9" /><path d="M13 8H25L32 15V32H13ZM25 8V15H32M18 20H27M18 26H27" /></svg></button>
            <button aria-label="Format painter" className="flex h-12 w-10 items-center justify-center"><svg width="34" height="34" viewBox="0 0 34 34" strokeWidth="2"><path d="M2 18L12 12L24 22L16 32Z" fill="#f5d58b" stroke="#d0752a" /><path d="M2 18L8 22M10 30L16 22" stroke="#d0752a" /><path d="M12 12L18 8L22 12L29 2L32 5L25 15L28 18L24 22Z" fill="#fff" stroke="#3b3a39" /></svg></button>
          </div>
        </Group>
        <Group label="Font" className="w-[502px]">
          <div className="flex flex-col pt-6 pl-[15px]">
            <div className="flex items-center">
              <div className="relative flex h-12 items-center border-2 border-[#8a8886] bg-white">
                <select aria-label="Font name" defaultValue="Arial" className="h-full w-[252px] appearance-none border-r-2 border-[#8a8886] pl-2 text-[22px]"><option>Arial</option></select>
                <select aria-label="Font size" defaultValue="10" className="h-full w-[102px] appearance-none pl-2.5 text-[22px]"><option>10</option></select>
                <Chevron w={10} h={7} className="pointer-events-none absolute left-[236px]" />
                <Chevron w={10} h={7} className="pointer-events-none absolute right-2" />
              </div>
              <button aria-label="Increase font size" className="ml-3.5 flex items-start text-[34px] leading-10 font-light text-[#3b3a39]">A<Chevron dir="up" w={9} h={6} className="mt-2 text-[#2b7cd3]" /></button>
              <button aria-label="Decrease font size" className="ml-6 flex items-start text-[28px] leading-10 font-light text-[#3b3a39]">A<Chevron w={9} h={6} className="mt-1.5 text-[#2b7cd3]" /></button>
            </div>
            <div className="mt-1 flex h-14 items-center text-[26px] text-[#3b3a39]">
              {fontButtons.map((f) => (
                <button key={f.label} aria-label={f.label} className="flex w-[52px] justify-center leading-8">{f.node}</button>
              ))}
              <button aria-label="Borders" className="ml-3 flex items-center gap-3">
                <svg width="30" height="30" viewBox="0 0 30 30" stroke="#3b3a39" strokeWidth="2" fill="none"><path d="M1 1H29M1 1V27M29 1V27M15 1V27M1 14H29" strokeDasharray="2 2" /><path d="M0 28H30" stroke="#000" strokeWidth="3" /></svg>
                <Chevron w={10} h={7} />
              </button>
              <button aria-label="Fill color" className="ml-4 flex items-center gap-2.5">
                <svg width="32" height="34" viewBox="0 0 32 34" fill="none" stroke="#3b3a39" strokeWidth="2"><path d="M5 15L15 3L24 13L15 23ZM15 3V0L19 1V10" fill="#fff" /><path d="M23 8C28 10 28 16 27 20C24 16 26 12 23 8Z" fill="#2b6cb5" stroke="#2b6cb5" /><rect y="25" width="32" height="9" fill="#ffff45" stroke="none" /></svg>
                <Chevron w={10} h={7} />
              </button>
              <button aria-label="Font color" className="ml-4 flex items-center gap-2.5">
                <span className="h-[34px] w-8 border-b-[9px] border-[#e83323] text-[28px] leading-6 font-light">A</span>
                <Chevron w={10} h={7} />
              </button>
            </div>
          </div>
        </Group>
        <Group label="Alignment" className="w-[444px]">
          <div className="grid h-36 grid-cols-[52px_52px_52px] grid-rows-3 pl-[17px]">
            {alignButtons.map((a) => (
              <button key={a.label} aria-label={a.label} className={`flex w-12 justify-center justify-self-center ${a.on ? "bg-[#e1dfdd]" : ""}`}><Lines rows={a.rows} /></button>
            ))}
            {["Decrease indent", "Increase indent"].map((l, i) => (
              <button key={l} aria-label={l} className="flex justify-center">
                <svg width="30" height="48" viewBox="0 0 30 48" fill="none" stroke="#252423" strokeWidth="2">
                  {i === 0 ? <path d="M1 11H29M1 19H12M1 27H12M1 35H29" /> : <path d="M1 11H29M18 19H29M18 27H29M1 35H29" />}
                  {i === 0 ? <path d="M29 23H17M22 18L17 23L22 28" stroke="#2b7cd3" /> : <path d="M1 23H13M8 18L13 23L8 28" stroke="#2b7cd3" />}
                </svg>
              </button>
            ))}
          </div>
          <div className="mt-2 ml-3 h-[140px] w-0.5 bg-[#d2d0ce]" />
          <div className="flex flex-col pt-5 pl-3.5 text-[20px]">
            <button className="flex h-14 items-center gap-1 pl-2">
              <svg width="34" height="38" viewBox="0 0 34 38" fill="none" aria-hidden="true"><text x="3" y="15" fontSize="16" fill="#3b3a39" fontFamily="Liberation Sans">ab</text><text x="3" y="33" fontSize="16" fill="#3b3a39" fontFamily="Liberation Sans">c</text><path d="M27 16C30 24 26 28 16 28M22 22L15 28L22 34" stroke="#2b7cd3" strokeWidth="2" /></svg>
              Wrap Text
            </button>
            <button className="flex h-14 items-center gap-3 whitespace-nowrap text-[#b3b0ad]">
              <svg width="30" height="30" viewBox="0 0 30 30" fill="none" strokeWidth="2" aria-hidden="true"><path d="M1 1H29V29H1ZM15 1V7M15 23V29" stroke="#b3b0ad" /><path d="M1 7H29V23H1ZM6 15H24M10 11L6 15L10 19M20 11L24 15L20 19" stroke="#9cc3e4" fill="none" /></svg>
              Merge &amp; Center
              <Chevron w={10} h={7} />
            </button>
          </div>
        </Group>
        <Group className="w-[130px]">
          <BigButton label="Number"><svg width="50" height="52" viewBox="0 0 50 52" fill="none" stroke="#3b3a39" strokeWidth="2"><ellipse cx="11" cy="13" rx="9" ry="11" /><ellipse cx="39" cy="38" rx="9" ry="11" /><path d="M39 2L10 50" /></svg></BigButton>
        </Group>
        <Group className="w-[122px]">
          <BigButton label="Tables" muted><svg width="62" height="58" viewBox="0 0 62 58" fill="none" stroke="#b3b0ad" strokeWidth="2"><path d="M2 5H57V48H2Z" fill="#faf9f8" /><path d="M20 19H57V48H20Z" fill="#c7dcef" stroke="none" /><path d="M2 19H57M2 33H57M20 5V48M38 5V48" /><path d="M60 20L42 44L36 40L56 19Z" fill="#fff" /><path d="M36 41L42 45C41 54 32 58 18 53C26 52 24 42 36 41Z" fill="#c7dcef" stroke="#9cc3e4" /></svg></BigButton>
        </Group>
        <Group className="w-[122px]">
          <BigButton label="Cells"><svg width="58" height="62" viewBox="0 0 58 62" fill="none" stroke="#252423" strokeWidth="2"><path d="M14 3H44M14 0V6M44 0V6" stroke="#2b7cd3" /><path d="M2 12H56V54H2Z" fill="#fff" /><path d="M2 26H56M2 40H56M17 12V54M41 12V54" stroke="#7a7877" /><path d="M17 26H41V40H17Z" fill="#8db9e8" stroke="#1f5fae" /></svg></BigButton>
        </Group>
        <Group className="w-[122px]">
          <BigButton label="Editing"><svg width="60" height="60" viewBox="0 0 60 60" stroke="#252423" strokeWidth="2" fill="#fafafa"><circle cx="38" cy="22" r="20" /><path d="M24 36L2 58" /></svg></BigButton>
        </Group>
        <Group label="Commands Group" className="w-[181px]">
          <BigButton label="Show" second="ToolPak">
            <span className="flex h-16 w-16 items-center justify-center bg-white"><svg width="60" height="40" viewBox="0 0 60 40"><path d="M4 0L40 4V14L6 18Z" fill="#9cc4ec" /><path d="M0 10L26 14L22 34L6 38Z" fill="#5e9cd8" /><path d="M58 6L34 14L38 34L54 36Z" fill="#4f8fd0" /><circle cx="34" cy="20" r="10" fill="#f4e05c" stroke="#b9a339" /><path d="M31 18L33 30M37 18L35 30" stroke="#8a7a22" fill="none" /><rect x="31" y="30" width="7" height="8" rx="2" fill="#444" /></svg></span>
          </BigButton>
        </Group>
        <button aria-label="Collapse ribbon" className="mr-2.5 mb-1.5 ml-auto self-end"><Chevron dir="up" w={18} h={10} /></button>
      </div>
    </div>
  );
}

/* ---------- Excel grid ---------- */

type Cell = { t?: React.ReactNode; c?: string; span?: number };
const YEL = "bg-[#fbf1cf] !border-[#fbf1cf]";
const GRN = "bg-[#c7d59f] !border-[#c7d59f]";
const BLU = "bg-[#9bafd3] !border-[#9bafd3]";
const ORA = "bg-[#efc096] !border-[#efc096]";
const R = "text-right";

const cells: Record<string, Cell> = {
  A1: { t: "College", c: "text-center font-bold" },
  B1: { t: "High School", c: "font-bold" },
  D1: { t: "Part b", c: "font-bold" },
  H1: { t: "Formula", c: "font-bold" },
  E2: { t: "College", c: "text-center font-bold" },
  F2: { t: "High School", c: "font-bold" },
  D3: { t: "Mean" },
  E3: { t: "541", c: `${R} ${BLU}` },
  F3: { t: "472", c: `${R} ${BLU}` },
  H3: { t: "=AVERAGE(A:A)", c: ORA },
  I3: { t: "=AVERAGE(B:B)", c: ORA },
  D5: { t: "Difference Between the Means" },
  E5: { t: "69", c: `${R} ${GRN}` },
  H5: { t: "=E3-F3", c: ORA },
  D7: { t: "Part c", c: "font-bold" },
  D24: { t: "Part d", c: "font-bold" },
  D25: { t: "Significance Level (Alpha)" },
  E25: { t: "0.05", c: R },
  D27: { t: <>Can we reject the null hypothesis?<br />(<i>Enter "Can" or "Cannot")</i></> },
  E27: { t: "CAN", c: GRN },
  H27: { t: '=IF(E17<E25,"CAN","CANNOT")', c: ORA },
};
["592", "592", "592", "480", "448", "656", "496", "448", "480", "448", "544", "448", "656", "624", "480", "672"].forEach((v, i) => { cells[`A${i + 2}`] = { t: v, c: "text-center" }; });
["516", "468", "552", "540", "468", "480", "384", "408", "396", "528", "468", "456"].forEach((v, i) => { cells[`B${i + 2}`] = { t: v, c: "text-center" }; });
const tTest: [string, string, string][] = [
  ["T Test: Two-Sample Assuming Unequal Variances", "", ""],
  ["", "", ""],
  ["", "592", "516"],
  ["Mean", "537.6", "468"],
  ["Variance", "7380.114286", "3196.8"],
  ["Observations", "15", "11"],
  ["Hypothesized Mean Difference", "0", ""],
  ["df", "23", ""],
  ["t Stat", "2.48789564", ""],
  ["P(T<=t) one-tail", "0.010267304", ""],
  ["t Critical one-tail", "1.713871480", ""],
  ["P(T<=t) two-tail", "0.020534608", ""],
  ["t Critical two-tail", "2.068657599", ""],
];
tTest.forEach(([d, e, f], i) => {
  const r = i + 8;
  cells[`D${r}`] = { t: d, c: YEL, span: i === 0 ? 2 : undefined };
  cells[`E${r}`] = { t: e, c: `${R} ${YEL}` };
  cells[`F${r}`] = { t: f, c: `${R} ${YEL}` };
});

const columns = [
  { n: "A", w: "w-[140px]" }, { n: "B", w: "w-[174px]" }, { n: "C", w: "w-[140px]" },
  { n: "D", w: "w-[414px]" }, { n: "E", w: "w-[188px]" }, { n: "F", w: "w-[188px]" },
  { n: "G", w: "w-[80px]" }, { n: "H", w: "w-[396px]" }, { n: "I", w: "w-[394px]" },
];

function Sheet() {
  return (
    <div className="min-h-0 flex-1 overflow-hidden bg-white">
      <table className={`w-px table-fixed border-separate border-spacing-0 text-[26px] leading-8 text-black ${ARIAL}`}>
        <colgroup>
          <col className="w-[72px]" />
          {columns.map((c) => <col key={c.n} className={c.w} />)}
        </colgroup>
        <thead className="font-['Noto_Sans',sans-serif] text-[25px] leading-7 text-[#616161]">
          <tr className="h-[38px]">
            <th className="border-r-2 border-b-2 border-[#dcdcdc] border-b-[#bdbdbd] bg-[#f4f4f4] p-0 align-bottom">
              <svg width="30" height="30" viewBox="0 0 30 30" className="ml-auto" aria-hidden="true"><path d="M28 0V30H0Z" fill="#b7b7b7" /></svg>
            </th>
            {columns.map((c) => (
              <th key={c.n} scope="col" className={`border-r-2 border-b-2 p-0 align-top ${c.n === "G" ? "border-[#b9b9b9] border-b-[#3a7647] bg-[#d9d8d6] font-bold text-[#3a7647]" : c.n === "E" ? "border-[#dcdcdc] border-b-[#3a7647] bg-[#f4f4f4] font-normal" : "border-[#dcdcdc] border-b-[#bdbdbd] bg-[#f4f4f4] font-normal"}`}>{c.n}</th>
            ))}
          </tr>
        </thead>
        <tbody>
          {Array.from({ length: 47 }, (_, i) => i + 1).map((r) => (
            <tr key={r} className={r === 27 ? "h-20" : "h-[34px]"}>
              <th scope="row" className={`border-r-2 border-b-2 p-0 pb-px align-bottom font-['Noto_Sans',sans-serif] text-[25px] leading-[30px] ${r === 41 ? "border-r-[#3a7647] border-b-[#b9b9b9] bg-[#d9d8d6] font-bold text-[#3a7647]" : "border-r-[#bdbdbd] border-b-[#dcdcdc] bg-[#f4f4f4] font-normal text-[#616161]"}`}>{r}</th>
              {columns.map((c, ci) => {
                const prev = ci > 0 ? cells[`${columns[ci - 1].n}${r}`] : undefined;
                if (prev?.span) return null;
                const cell = cells[`${c.n}${r}`];
                return (
                  <td key={c.n} colSpan={cell?.span} className={`relative border-r border-b border-[#d4d4d4] px-[5px] pt-0 pb-px align-bottom whitespace-nowrap ${cell?.c ?? ""}`}>
                    {cell?.t}
                    {c.n === "G" && r === 41 && (
                      <span className="absolute -inset-[3px] z-10 border-4 border-x-[3px] border-[#3a7647]"><span className="absolute -right-[5px] -bottom-[6px] h-2 w-2 border-t-2 border-l-2 border-white bg-[#3a7647]" /></span>
                    )}
                  </td>
                );
              })}
            </tr>
          ))}
        </tbody>
      </table>
    </div>
  );
}

function Excel() {
  return (
    <section className={`flex min-w-0 flex-1 flex-col overflow-hidden bg-[#f4f4f4] ${SANS}`}>
      <BrowserBar />
      <header className="flex h-24 shrink-0 items-center border-t-2 border-[#1f5c2c] bg-[#3b7a46] pl-[33px] text-[26px] text-white">
        <b className="text-[28px]">Excel</b>
        <button className="ml-[51px] flex w-[273px] items-center justify-between whitespace-pre">{"template  -  Saved"}<Chevron w={16} h={9} /></button>
        <label className="ml-[289px] flex h-16 w-[608px] items-center rounded border-2 border-[#dbe7de] bg-[#c9d9d0] text-[#276238]">
          <svg width="30" height="30" viewBox="0 0 30 30" fill="none" stroke="currentColor" strokeWidth="2" className="ml-[35px] shrink-0" aria-hidden="true"><circle cx="19" cy="11" r="9.500" /><path d="M12 18L1 29" /></svg>
          <input placeholder="Search (Option + Q)" className="ml-6 w-full text-[27px] outline-none placeholder:text-[#276238]" />
        </label>
      </header>
      <Ribbon />
      <div className="flex h-[72px] shrink-0 items-start gap-1.5 pt-2 pr-2 pl-2">
        <div className="relative flex h-12 w-[244px] items-center border-[3px] border-[#e6e6e6] bg-white text-[#444]">
          <input aria-label="Name box" defaultValue="G41" className="w-full pl-1 text-[26px]" />
          <Chevron w={10} h={7} className="absolute right-1.5" />
        </div>
        <button aria-label="Insert function" className={`h-12 w-[62px] border-[3px] border-[#e6e6e6] bg-white pl-1 text-[30px] leading-9 text-[#333] italic ${SERIF}`}>fx</button>
        <input aria-label="Formula" className="h-12 flex-1 border-[3px] border-[#e6e6e6] bg-white px-2" />
      </div>
      <Sheet />
      <div className="flex h-[66px] shrink-0 items-stretch border-b-2 border-[#dcdcdc] pl-[26px] text-[#444]">
        <button aria-label="Previous sheet" className="text-[#b9b9b9]"><Chevron dir="left" w={11} h={18} /></button>
        <button aria-label="Next sheet" className="ml-[54px] text-[#b9b9b9]"><Chevron dir="right" w={11} h={18} /></button>
        <button aria-label="All sheets" className="ml-[46px] text-[#b9b9b9]"><svg width="24" height="20" viewBox="0 0 24 20" stroke="currentColor" strokeWidth="2"><path d="M0 2H24M0 10H24M0 18H24" /></svg></button>
        <button className="ml-10 flex items-center gap-3 border-b-[6px] border-[#3a7647] pt-1 text-[26px] font-bold">
          <svg width="20" height="28" viewBox="0 0 20 28" fill="none" stroke="currentColor" strokeWidth="2" aria-hidden="true" className="mb-1"><rect x="1" y="12" width="18" height="14" /><path d="M5 12V6a5 5 0 0 1 10 0v6" /></svg>
          Data
        </button>
        <button aria-label="New sheet" className="ml-[39px]"><svg width="24" height="24" viewBox="0 0 24 24" stroke="currentColor" strokeWidth="2"><path d="M12 0V24M0 12H24" /></svg></button>
      </div>
      <footer className="flex h-11 shrink-0 items-center bg-white pr-8 pl-[27px] text-[21px] text-[#444]">
        <span>Calculation Mode: Automatic</span>
        <span className="ml-9">Workbook Statistics</span>
        <Chevron w={10} h={6} className="ml-auto" />
        <a href="#" className="ml-[82px]">Give Feedback to Microsoft</a>
        <button aria-label="Zoom out" className="ml-[80px]"><svg width="22" height="22" viewBox="0 0 22 22" stroke="currentColor" strokeWidth="2"><path d="M0 11H22" /></svg></button>
        <span className="mx-4">100%</span>
        <button aria-label="Zoom in" className="pr-0.5"><svg width="22" height="22" viewBox="0 0 22 22" stroke="currentColor" strokeWidth="2"><path d="M0 11H22M11 0V22" /></svg></button>
      </footer>
    </section>
  );
}

export default function App() {
  return (
    <div className="flex h-screen w-full overflow-hidden bg-black">
      <MindTap />
      <div role="separator" aria-orientation="vertical" className="flex w-6 shrink-0 items-center justify-center">
        <span className="h-32 w-2 rounded bg-[#8c8c8c]" />
      </div>
      <Excel />
    </div>
  );
}
